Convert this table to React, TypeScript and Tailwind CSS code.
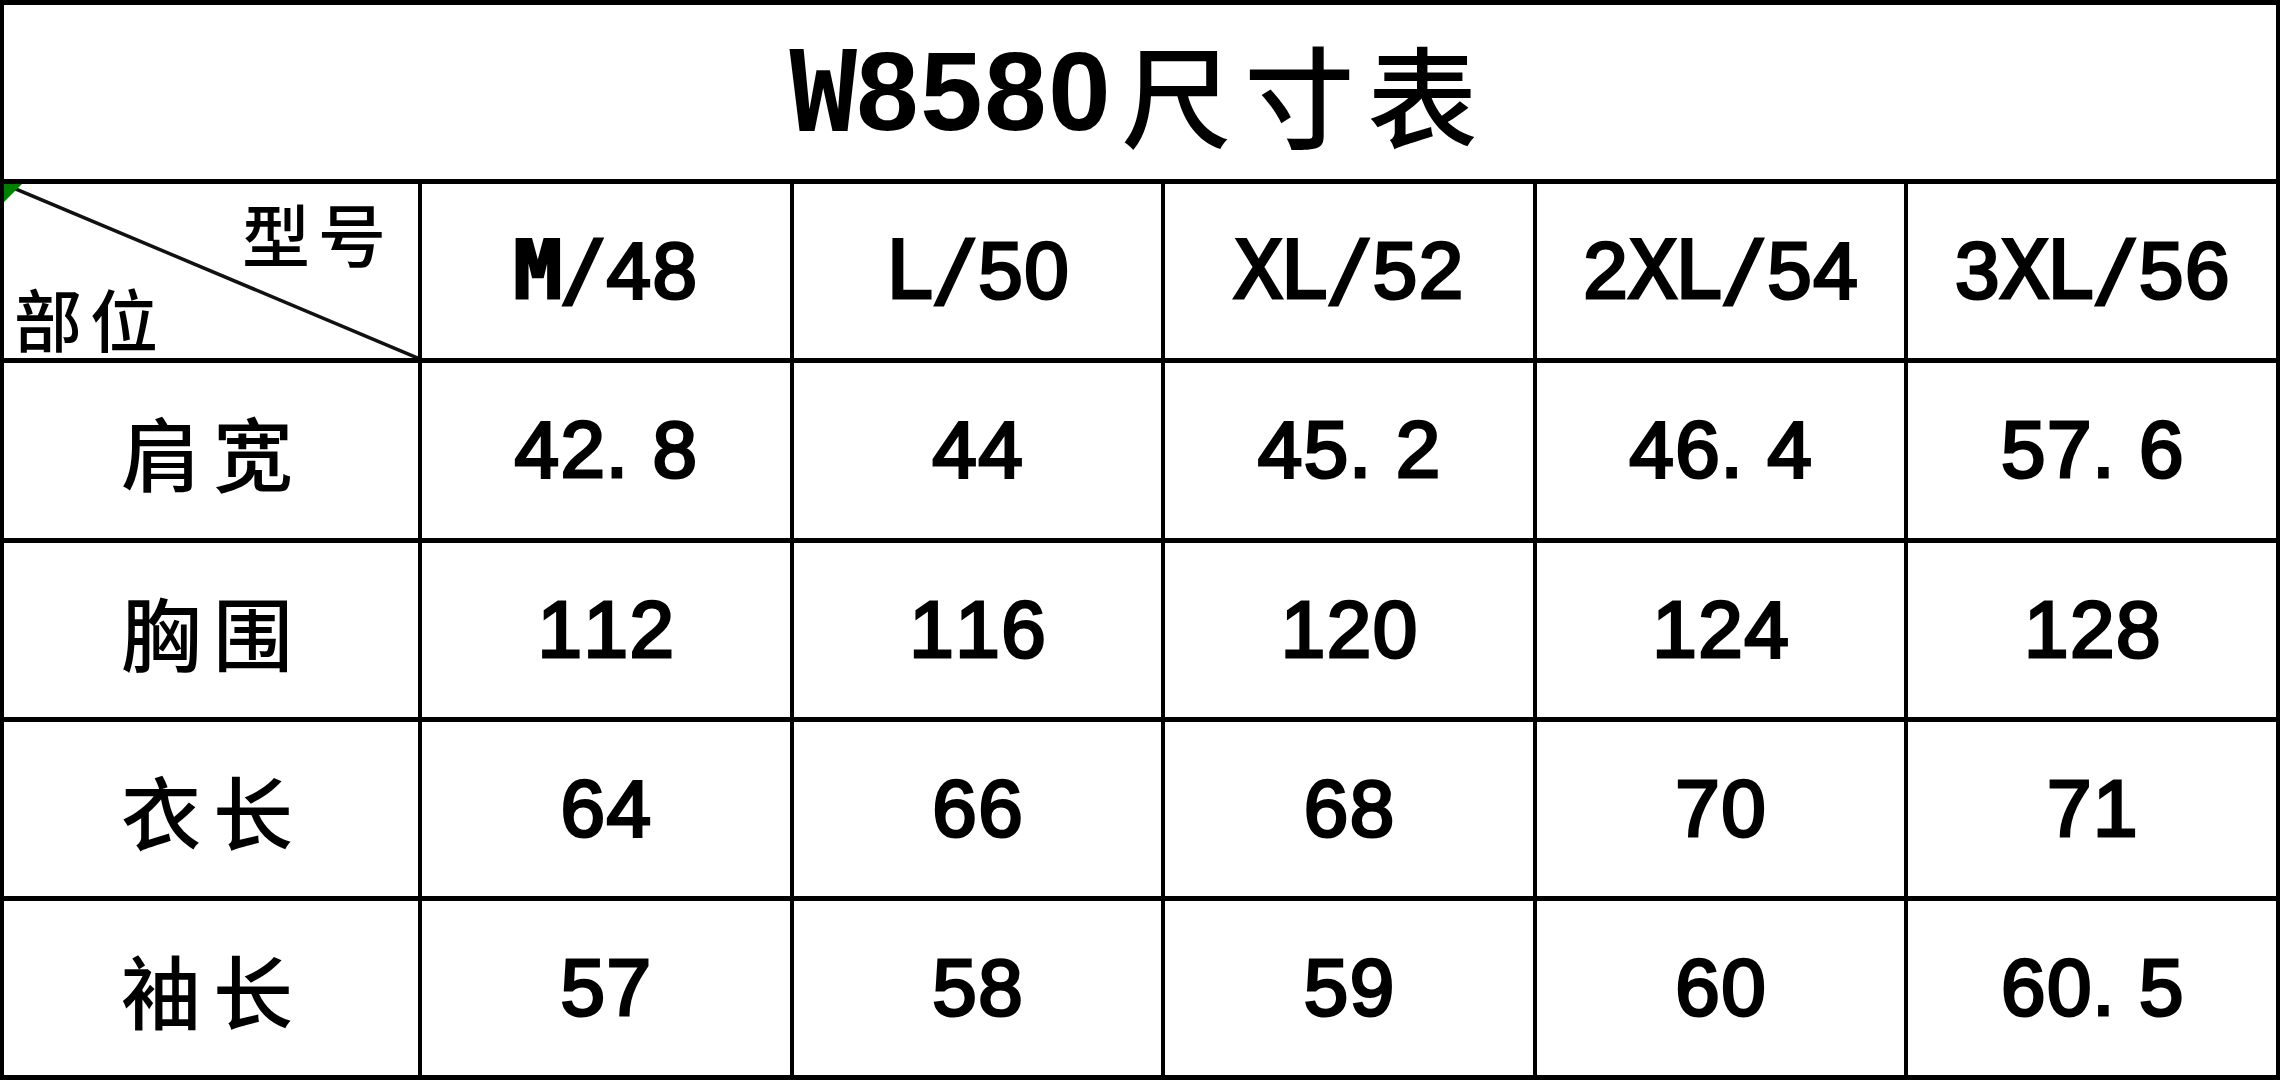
import React from "react";
import clsx from "clsx";

const sizes = ["M/48", "L/50", "XL/52", "2XL/54", "3XL/56"];

const rows: [string, string[]][] = [
  ["肩宽", ["42.8", "44", "45.2", "46.4", "57.6"]],
  ["胸围", ["112", "116", "120", "124", "128"]],
  ["衣长", ["64", "66", "68", "70", "71"]],
  ["袖长", ["57", "58", "59", "60", "60.5"]],
];

// half-width cells, like the SimHei spacing in the original sheet
function Mono({ text }: { text: string }) {
  return (
    <span className="inline-flex leading-none text-[80px] text-black [-webkit-text-stroke:3px_#000]">
      {text.split("").map((c, i) => (
        <span
          key={i}
          className={clsx(
            "inline-block w-[46px]",
            /[A-Z/]/.test(c)
              ? "font-['DejaVu_Sans_Mono',monospace]"
              : "font-['Liberation_Sans',Arial,sans-serif]",
            c === "M" && "font-bold",
            c === "." ? "text-left" : "text-center"
          )}
        >
          {c}
        </span>
      ))}
    </span>
  );
}

function Cell({ children, className }: { children?: React.ReactNode; className?: string }) {
  return <div className={clsx("flex items-center justify-center bg-white", className)}>{children}</div>;
}

export default function App() {
  return (
    <div className="grid h-[1080px] w-[2280px] grid-cols-[414px_repeat(5,1fr)] grid-rows-[repeat(6,1fr)] gap-x-[4px] gap-y-[5px] bg-black px-[4px] py-[5px]">
      <Cell className="col-span-6">
        <span className="inline-flex items-center leading-none text-black">
          <span className="inline-block w-[66px] text-center font-['DejaVu_Sans_Mono',monospace] text-[112px] font-bold">W</span>
          {"8580".split("").map((c, i) => (
            <span key={i} className="inline-block w-[64px] text-center font-['Liberation_Sans',Arial,sans-serif] text-[112px] font-bold">
              {c}
            </span>
          ))}
          <span className="ml-[10px] font-['Noto_Sans_CJK_SC',sans-serif] text-[110px] font-medium tracking-[13px]">尺寸表</span>
        </span>
      </Cell>

      <div className="relative bg-white">
        <svg className="absolute inset-0 h-full w-full" preserveAspectRatio="none" viewBox="0 0 100 100">
          <line x1="0" y1="0" x2="100" y2="100" stroke="#111" strokeWidth="3.5" vectorEffect="non-scaling-stroke" />
        </svg>
        <svg className="absolute left-0 top-0 h-[18px] w-[18px]" viewBox="0 0 18 18">
          <polygon points="0,0 18,0 0,18" fill="#008000" />
        </svg>
        <div className="relative flex h-full flex-col justify-between pb-[6px] pl-[10px] pr-[24px] pt-[15px] font-['Noto_Sans_CJK_SC',sans-serif] text-[68px] font-medium leading-none text-black">
          <span className="self-end tracking-[8px]">型号</span>
          <span className="self-start tracking-[8px]">部位</span>
        </div>
      </div>
      {sizes.map((s) => (
        <Cell key={s}>
          <Mono text={s} />
        </Cell>
      ))}

      {rows.map(([label, vals]) => (
        <React.Fragment key={label}>
          <Cell>
            <span className="pl-[4px] font-['Noto_Sans_CJK_SC',sans-serif] text-[80px] font-medium leading-none tracking-[12px] text-black">{label}</span>
          </Cell>
          {vals.map((v, i) => (
            <Cell key={i}>
              <Mono text={v} />
            </Cell>
          ))}
        </React.Fragment>
      ))}
    </div>
  );
}
